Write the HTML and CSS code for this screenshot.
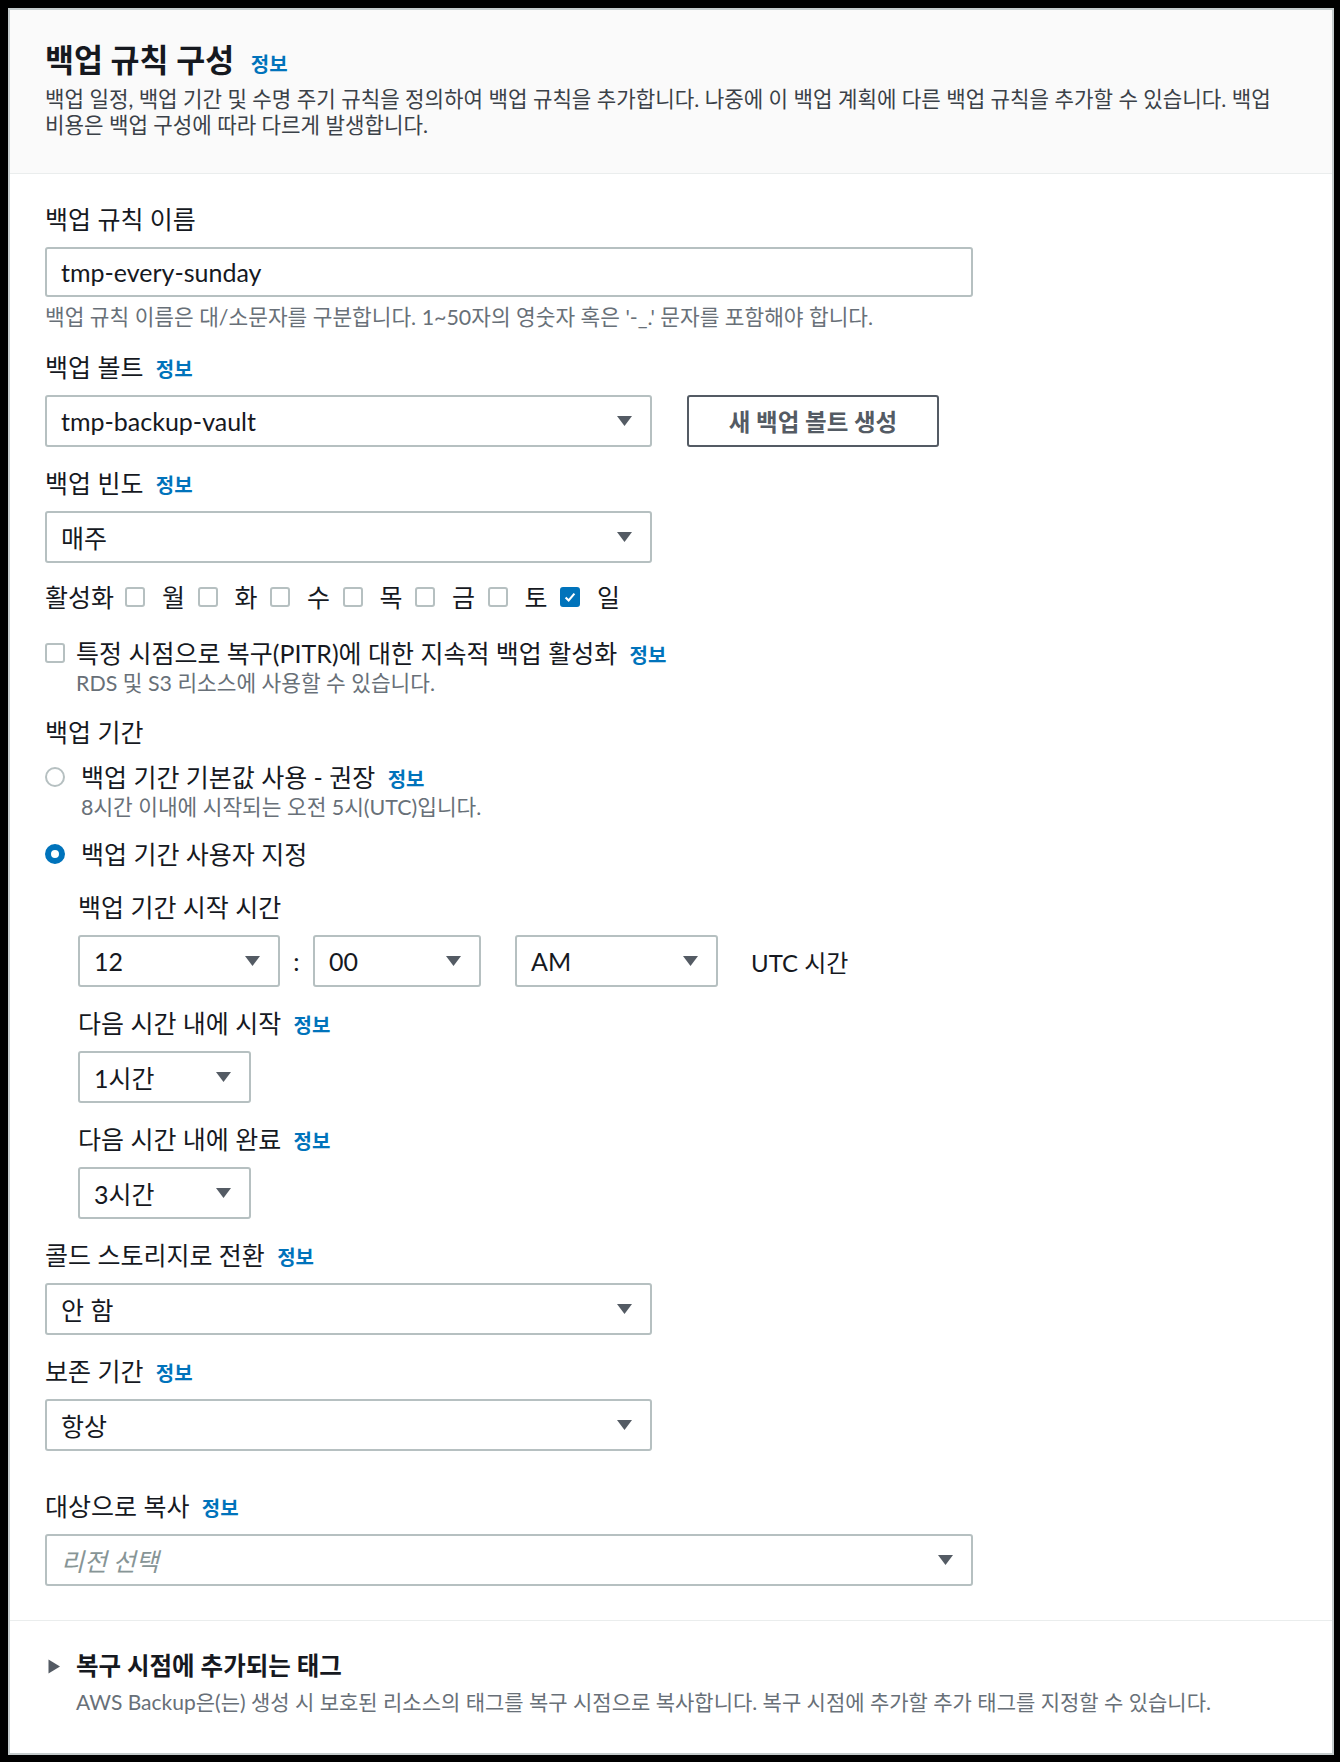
FILE: index.html
```html
<!DOCTYPE html>
<html lang="ko">
<head>
<meta charset="utf-8">
<title>백업 규칙 구성</title>
<link rel="stylesheet" href="styles.css">
</head>
<body>
<div class="page">
  <section class="panel">
    <header class="panel-header">
      <h2 class="title">백업 규칙 구성 <a class="info">정보</a></h2>
      <p class="desc">백업 일정, 백업 기간 및 수명 주기 규칙을 정의하여 백업 규칙을 추가합니다. 나중에 이 백업 계획에 다른 백업 규칙을 추가할 수 있습니다. 백업 비용은 백업 구성에 따라 다르게 발생합니다.</p>
    </header>

    <div class="panel-body">
      <div class="field">
        <div class="label">백업 규칙 이름</div>
        <div class="input wide">tmp-every-sunday</div>
        <div class="hint hint-input">백업 규칙 이름은 대/소문자를 구분합니다. 1~50자의 영숫자 혹은 '-_.' 문자를 포함해야 합니다.</div>
      </div>

      <div class="field field-after-hint">
        <div class="label">백업 볼트 <a class="info">정보</a></div>
        <div class="row">
          <div class="select medium"><span>tmp-backup-vault</span><svg class="caret" viewBox="0 0 17 12"><path d="M1 1h15L8.5 11z"/></svg></div>
          <button class="btn">새 백업 볼트 생성</button>
        </div>
      </div>

      <div class="field">
        <div class="label">백업 빈도 <a class="info">정보</a></div>
        <div class="select medium"><span>매주</span><svg class="caret" viewBox="0 0 17 12"><path d="M1 1h15L8.5 11z"/></svg></div>
      </div>

      <div class="days">
        <span class="days-label">활성화</span>
        <span class="day"><span class="cb"></span><span class="day-name">월</span></span>
        <span class="day"><span class="cb"></span><span class="day-name">화</span></span>
        <span class="day"><span class="cb"></span><span class="day-name">수</span></span>
        <span class="day"><span class="cb"></span><span class="day-name">목</span></span>
        <span class="day"><span class="cb"></span><span class="day-name">금</span></span>
        <span class="day"><span class="cb"></span><span class="day-name">토</span></span>
        <span class="day"><span class="cb checked"><svg viewBox="0 0 20 20"><path d="M4.5 10.5l3.8 3.8 7.2-8.6" fill="none" stroke="#fff" stroke-width="2.6"/></svg></span><span class="day-name">일</span></span>
      </div>

      <div class="check-row">
        <span class="cb"></span>
        <div class="check-text">
          <div class="check-label">특정 시점으로 복구(PITR)에 대한 지속적 백업 활성화 <a class="info">정보</a></div>
          <div class="hint">RDS 및 S3 리소스에 사용할 수 있습니다.</div>
        </div>
      </div>

      <div class="field">
        <div class="label label-group">백업 기간</div>
        <div class="radio-row">
          <span class="radio"></span>
          <div class="radio-text">
            <div class="radio-label">백업 기간 기본값 사용 - 권장 <a class="info">정보</a></div>
            <div class="hint">8시간 이내에 시작되는 오전 5시(UTC)입니다.</div>
          </div>
        </div>
        <div class="radio-row second">
          <span class="radio on"></span>
          <div class="radio-text">
            <div class="radio-label">백업 기간 사용자 지정</div>
          </div>
        </div>

        <div class="sub">
          <div class="sub-field">
            <div class="label">백업 기간 시작 시간</div>
            <div class="time-row">
              <div class="select hour"><span>12</span><svg class="caret" viewBox="0 0 17 12"><path d="M1 1h15L8.5 11z"/></svg></div>
              <span class="colon">:</span>
              <div class="select minute"><span>00</span><svg class="caret" viewBox="0 0 17 12"><path d="M1 1h15L8.5 11z"/></svg></div>
              <div class="select ampm"><span>AM</span><svg class="caret" viewBox="0 0 17 12"><path d="M1 1h15L8.5 11z"/></svg></div>
              <span class="utc">UTC 시간</span>
            </div>
          </div>
          <div class="sub-field">
            <div class="label">다음 시간 내에 시작 <a class="info">정보</a></div>
            <div class="select small"><span>1시간</span><svg class="caret" viewBox="0 0 17 12"><path d="M1 1h15L8.5 11z"/></svg></div>
          </div>
          <div class="sub-field">
            <div class="label">다음 시간 내에 완료 <a class="info">정보</a></div>
            <div class="select small"><span>3시간</span><svg class="caret" viewBox="0 0 17 12"><path d="M1 1h15L8.5 11z"/></svg></div>
          </div>
        </div>
      </div>

      <div class="field">
        <div class="label">콜드 스토리지로 전환 <a class="info">정보</a></div>
        <div class="select medium"><span>안 함</span><svg class="caret" viewBox="0 0 17 12"><path d="M1 1h15L8.5 11z"/></svg></div>
      </div>

      <div class="field">
        <div class="label">보존 기간 <a class="info">정보</a></div>
        <div class="select medium"><span>항상</span><svg class="caret" viewBox="0 0 17 12"><path d="M1 1h15L8.5 11z"/></svg></div>
      </div>

      <div class="field field-copy">
        <div class="label">대상으로 복사 <a class="info">정보</a></div>
        <div class="select wide"><span class="placeholder">리전 선택</span><svg class="caret" viewBox="0 0 17 12"><path d="M1 1h15L8.5 11z"/></svg></div>
      </div>
    </div>

    <div class="expand">
      <div class="expand-head"><svg class="tri" viewBox="0 0 14 17"><path d="M1.5 1.5l11.5 7-11.5 7z"/></svg><span>복구 시점에 추가되는 태그</span></div>
      <div class="expand-desc">AWS Backup은(는) 생성 시 보호된 리소스의 태그를 복구 시점으로 복사합니다. 복구 시점에 추가할 추가 태그를 지정할 수 있습니다.</div>
    </div>
  </section>
</div>
</body>
</html>
```
FILE: styles.css
```css
* { box-sizing: border-box; }
html, body { margin: 0; padding: 0; }
body {
  background: #000;
  font-family: Lato, "Noto Sans CJK KR", sans-serif;
  color: #16191f;
  word-break: keep-all;
}
.page { padding: 8px 6px 7px 8px; }
.panel {
  background: #fff;
  border: 2px solid #c4cbcc;
  height: 1747px;
  display: flex;
  flex-direction: column;
}
.info {
  color: #0073bb;
  font-weight: 700;
  font-size: 20px;
  line-height: 1;
  margin-left: 6px;
  cursor: pointer;
}
.panel-header {
  background: #fafafa;
  border-bottom: 1px solid #eaeded;
  padding: 30px 35px 0 35px;
  height: 164px;
}
.title {
  font-size: 31.5px;
  font-weight: 700;
  line-height: 40px;
  height: 40px;
  margin: 0;
}
.title .info { font-size: 20px; margin-left: 9px; }
.desc {
  font-size: 21.2px;
  line-height: 26px;
  margin: 6px 0 0;
  color: #3b4148;
}
.panel-body {
  padding: 30px 35px 34px;
  border-bottom: 1px solid #eaeded;
}
.field { margin-top: 21px; }
.field:first-child { margin-top: 0; }
.field-after-hint { margin-top: 22px; }
.field-copy { margin-top: 40px; }
.label {
  font-size: 25px;
  line-height: 30px;
  height: 30px;
  margin-bottom: 13px;
}
.label-group { margin-bottom: 15px; }
.input, .select {
  height: 50px;
  border: 2px solid #b6c0c1;
  border-radius: 3px;
  background: #fff;
  font-size: 25px;
  padding: 0 0 0 14px;
  display: flex;
  align-items: center;
}
.select { height: 52px; justify-content: space-between; padding-right: 17px; }
.wide { width: 928px; }
.medium { width: 607px; }
.caret { width: 17px; height: 12px; fill: #545b64; flex: none; }
.placeholder { color: #879596; font-style: italic; }
.hint {
  font-size: 21.4px;
  line-height: 26px;
  color: #687078;
  margin-top: 2px;
}
.hint-input { margin-top: 7px; }
.row { display: flex; align-items: center; gap: 35px; }
.btn {
  width: 252px;
  height: 52px;
  border: 2px solid #545b64;
  border-radius: 3px;
  background: #fff;
  color: #545b64;
  font-family: inherit;
  font-weight: 700;
  font-size: 23.5px;
  padding: 0;
}
.days {
  display: flex;
  align-items: center;
  margin-top: 19px;
  font-size: 25px;
  line-height: 30px;
  height: 30px;
}
.days-label { width: 80px; }
.day { display: flex; align-items: center; width: 72.5px; flex: none; }
.day-name { margin-left: 17px; }
.cb {
  width: 20px;
  height: 20px;
  border: 2px solid #b6c0c1;
  border-radius: 3px;
  background: #fff;
  flex: none;
  display: inline-flex;
}
.cb.checked { background: #0073bb; border-color: #0073bb; }
.cb.checked svg { width: 100%; height: 100%; }
.check-row {
  display: flex;
  align-items: flex-start;
  margin-top: 26px;
}
.check-row .cb { margin-top: 5px; }
.check-text { margin-left: 11px; }
.check-label, .radio-label { font-size: 25px; line-height: 30px; height: 30px; }
.radio-row { display: flex; align-items: flex-start; }
.radio-row.second { margin-top: 19px; }
.radio {
  width: 20px;
  height: 20px;
  border: 2px solid #b6c0c1;
  border-radius: 50%;
  margin-top: 5px;
  flex: none;
}
.radio.on { border: 6px solid #0073bb; }
.radio-text { margin-left: 16px; }
.sub { margin-left: 33px; margin-top: 23px; }
.sub-field { margin-top: 21px; }
.sub-field:first-child { margin-top: 0; }
.time-row { display: flex; align-items: center; }
.hour { width: 202px; }
.minute { width: 168px; }
.ampm { width: 203px; margin-left: 34px; }
.colon { width: 33px; text-align: center; font-size: 25px; }
.utc { margin-left: 33px; font-size: 24px; }
.small { width: 173px; }
.expand { padding: 30px 35px 0 37px; }
.expand-head {
  display: flex;
  align-items: center;
  font-size: 24.5px;
  font-weight: 700;
  line-height: 30px;
  height: 30px;
}
.tri { width: 14px; height: 17px; fill: #545b64; margin-right: 15px; }
.expand-desc {
  font-size: 21px;
  line-height: 26px;
  color: #687078;
  margin-top: 8px;
  padding-left: 29px;
}
```
